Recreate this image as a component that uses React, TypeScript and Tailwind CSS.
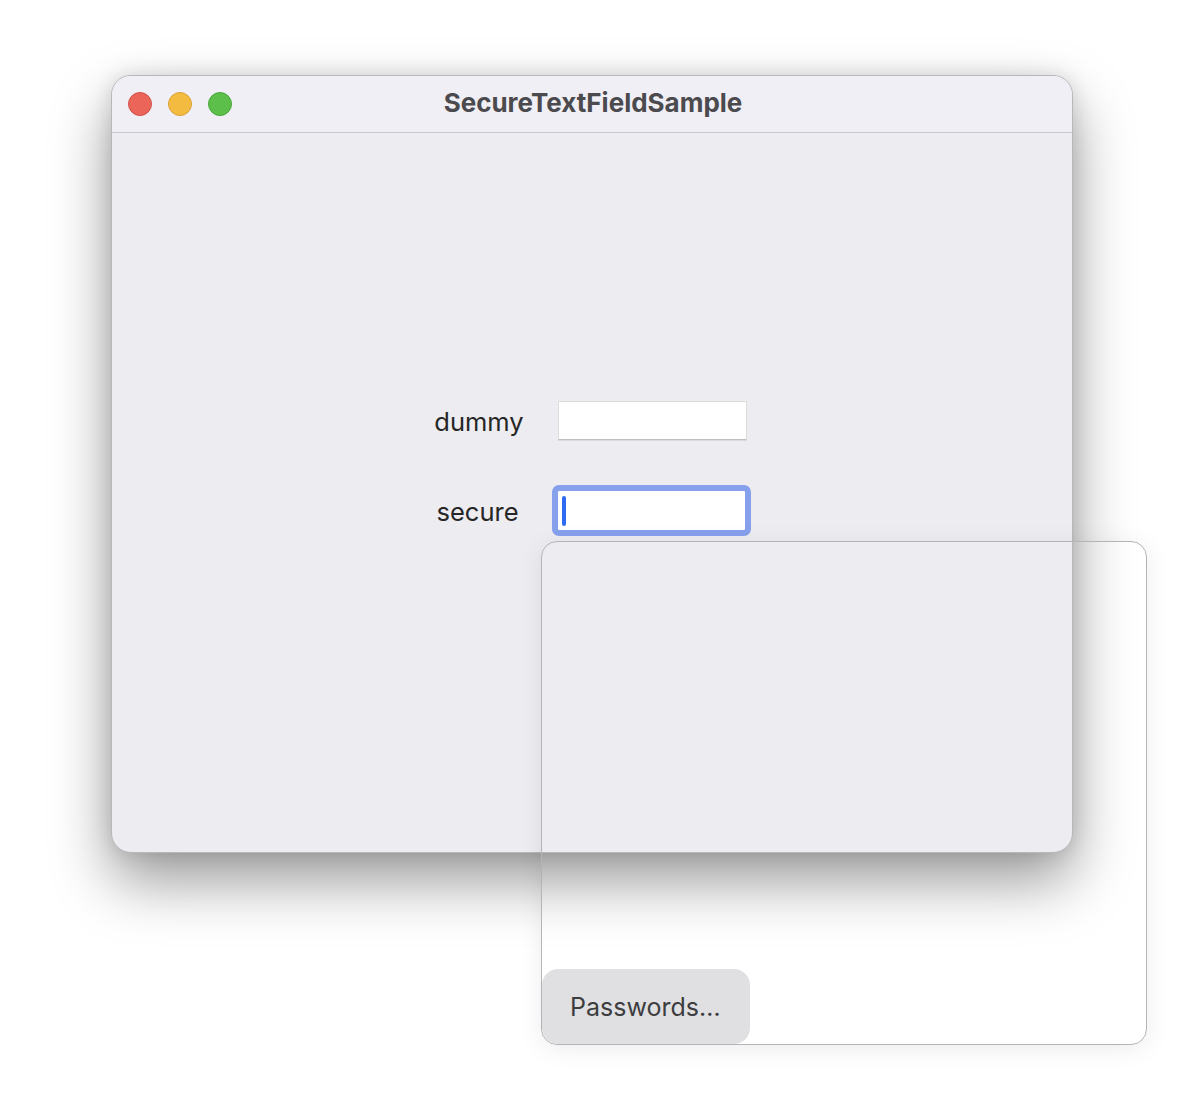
import React from "react";

export default function App() {
  return (
    <div className="relative w-[1192px] h-[1098px] bg-white overflow-hidden" style={{ fontFamily: "Inter, 'Noto Sans', sans-serif" }}>
      {/* Window */}
      <div className="absolute left-[111px] top-[75px] w-[962px] h-[778px] rounded-[20px] border border-[#b8b8bc] bg-[#edecf1] shadow-[0_28px_60px_rgba(0,0,0,0.4),0_0_20px_rgba(0,0,0,0.12)] overflow-hidden flex flex-col">
        <div className="relative h-[57px] shrink-0 bg-[#f0eff5] border-b border-[#cacace] flex items-center">
          <div className="flex items-center gap-[16px] pl-[16px]">
            <span className="w-[24px] h-[24px] rounded-full bg-[#ec6559] border border-[#d1514a]" />
            <span className="w-[24px] h-[24px] rounded-full bg-[#f4bb41] border border-[#d9a13a]" />
            <span className="w-[24px] h-[24px] rounded-full bg-[#5bbf49] border border-[#4aa63b]" />
          </div>
          <div className="absolute inset-0 flex items-center justify-center pl-[2px] pb-[3px] text-[26px] font-bold text-[#4b4a4e]">
            SecureTextFieldSample
          </div>
        </div>
        <div className="flex-1 flex flex-col pt-[268px] pl-[312px] gap-[51px]">
          <div className="flex items-center h-[39px]">
            <div className="w-[110px] text-center leading-[39px] translate-y-[1px] text-[25.5px] text-[#262626]">dummy</div>
            <div className="ml-[24px] w-[189px] h-[39px] bg-white border border-[#dcdcdc] border-b-[#bdbdbd] shadow-[0_1px_0_rgba(0,0,0,0.08)]" />
          </div>
          <div className="flex items-center h-[39px]">
            <div className="w-[107px] text-center leading-[39px] translate-y-[1px] text-[25.5px] text-[#262626]">secure</div>
            <div className="ml-[27px] w-[187px] h-[39px] bg-white rounded-[1px] outline-[6px] outline-solid outline-[#86a0ec] flex items-center pl-[4px]">
              <div className="w-[4px] h-[30px] rounded-full bg-[#2f6bf2]" />
            </div>
          </div>
        </div>
      </div>

      {/* Password popup */}
      <div className="absolute left-[541px] top-[541px] w-[606px] h-[504px] rounded-[16px] border border-[#b4b4b8] shadow-[0_4px_24px_rgba(0,0,0,0.08)] overflow-hidden flex flex-col justify-end">
        <div className="w-[208px] h-[75px] bg-[#e0e0e2] rounded-[16px] flex items-center pl-[28px] pt-[2px] text-[25px] text-[#3d3d3f]">
          Passwords…
        </div>
      </div>
    </div>
  );
}
